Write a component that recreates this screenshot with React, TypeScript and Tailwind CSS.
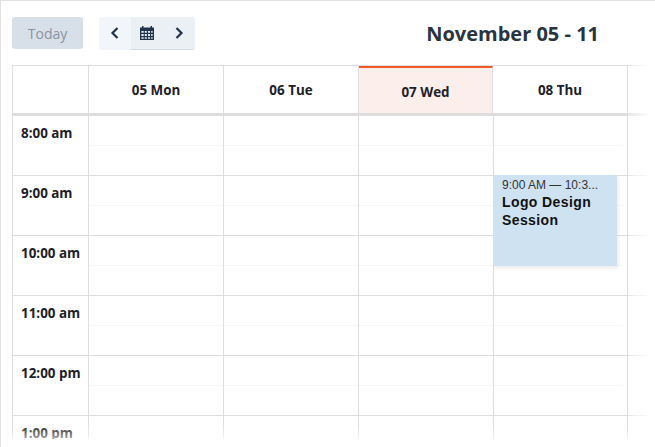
import React from "react";

const days = ["05 Mon", "06 Tue", "07 Wed", "08 Thu"];
const times = ["8:00 am", "9:00 am", "10:00 am", "11:00 am", "12:00 pm", "1:00 pm"];
const headWidths = ["w-[135px]", "w-[135px]", "w-[134px]", "w-[135px]"];
const bodyWidths = ["w-[135px]", "w-[135px]", "w-[135px]", "w-[134px]"];

function Row({ label, event }: { label: string; event?: boolean }) {
  return (
    <div className="flex h-[60px] shrink-0 border-b border-[#dedede]">
      <div className="w-[76px] shrink-0 border-r border-[#dedede] pl-2 pt-[5px] text-[13.4px] leading-[24px] font-bold text-[#1d2128]">
        {label}
      </div>
      {[0, 1, 2, 3].map((i) => (
        <div key={i} className={`relative ${bodyWidths[i]} shrink-0 border-r border-[#dedede]`}>
          <div className={i === 3 ? "mr-[4px] h-[30px] border-b border-[#f6f6f6]" : "h-[30px] border-b border-[#f6f6f6]"} />
          {event && i === 3 && (
            <div className="absolute left-[-1px] top-[-1px] z-10 h-[91px] w-[124px] bg-[#cfe2f1] pl-[9px] pt-[2px] font-['Liberation_Sans',sans-serif] shadow-[1px_2px_4px_rgba(0,0,0,0.09)]">
              <div className="text-[12px] leading-[16px] text-[#333]">9:00 AM — 10:3...</div>
              <div className="text-[14px] leading-[18px] font-bold tracking-[0.4px] text-[#111]">
                Logo Design
                <br />
                Session
              </div>
            </div>
          )}
        </div>
      ))}
    </div>
  );
}

export default function App() {
  return (
    <div className="relative h-[447px] w-[655px] overflow-hidden border-l border-t border-[#e2e2e2] bg-white font-['Open_Sans',sans-serif]">
      <div className="flex h-[64px] items-center pl-[11px] pr-[56px]">
        <button className="h-[32px] w-[71px] rounded-[3px] bg-[#d7e0e8] text-[14px] text-[#8b93a3]">Today</button>
        <div className="ml-[16px] flex h-[33px] w-[96px] overflow-hidden rounded-[3px] text-[#22344c]">
          <div className="flex w-[32px] items-center justify-center bg-[#f2f6fa]">
            <svg width="10" height="12" viewBox="0 0 10 12" fill="none" stroke="currentColor" strokeWidth="2.2">
              <path d="M7.5 1 L2.5 6 L7.5 11" />
            </svg>
          </div>
          <div className="flex w-[32px] items-center justify-center border-b border-[#d5dce3] bg-[#ebf0f5]">
            <svg width="16" height="15" viewBox="0 0 16 15" fill="currentColor">
              <path d="M1 2.5h2V1h1.5v1.5h7V1H13v1.5h2V15H1zM2.4 6v1.8h2.3V6zm3.4 0v1.8h2V6zm3.2 0v1.8h2V6zm3.2 0v1.8h1.4V6zM2.4 9v2h2.3V9zm3.4 0v2h2V9zm3.2 0v2h2V9zm3.2 0v2h1.4V9zM2.4 12.2v1.5h2.3v-1.5zm3.4 0v1.5h2v-1.5zm3.2 0v1.5h2v-1.5zm3.2 0v1.5h1.4v-1.5z" fillRule="evenodd" />
            </svg>
          </div>
          <div className="flex w-[32px] items-center justify-center border-b border-[#d5dce3] bg-[#ebf0f5]">
            <svg width="10" height="12" viewBox="0 0 10 12" fill="none" stroke="currentColor" strokeWidth="2.2">
              <path d="M2.5 1 L7.5 6 L2.5 11" />
            </svg>
          </div>
        </div>
        <div className="ml-auto pt-[1px] text-[20px] leading-[28px] font-bold text-[#2a3440]">November 05 - 11</div>
      </div>

      <div className="ml-[11px] w-[644px] border-l border-t border-[#dedede]">
        <div className="flex h-[50px] border-b-[3px] border-[#dedede]">
          <div className="w-[76px] shrink-0 border-r border-[#dedede]" />
          {days.map((d, i) => (
            <div
              key={d}
              className={
                i === 2
                  ? `flex ${headWidths[i]} shrink-0 items-center justify-center border-r border-t-2 border-r-[#dedede] border-t-[#f15a29] bg-[#fbeeeb] pt-[3px] text-[13.4px] font-bold text-[#1d2128]`
                  : `flex ${headWidths[i]} shrink-0 items-center justify-center border-r border-[#dedede] pt-[2px] text-[13.4px] font-bold text-[#1d2128]`
              }
            >
              {d}
            </div>
          ))}
        </div>
        {times.map((t, i) => (
          <Row key={t} label={t} event={i === 1} />
        ))}
      </div>

      {/* fades lying over the grid */}
      <div className="pointer-events-none absolute bottom-[8px] left-0 z-20 h-[14px] w-full bg-gradient-to-b from-white/0 to-white/60" />
      <div className="pointer-events-none absolute bottom-0 left-0 z-20 h-[8px] w-full bg-white" />
      <div className="pointer-events-none absolute right-0 top-0 z-20 h-full w-[27px] bg-gradient-to-r from-white/30 to-white to-[85%]" />
    </div>
  );
}
